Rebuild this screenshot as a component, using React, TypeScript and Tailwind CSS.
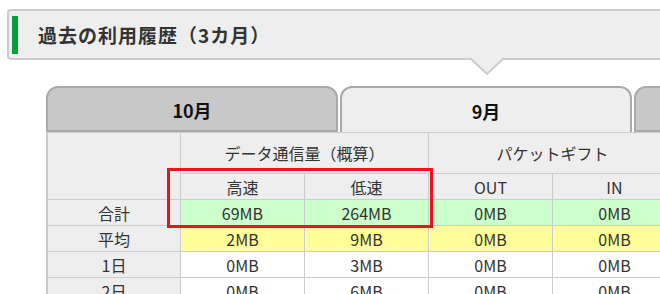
import React from 'react';

interface UsageRow {
    label: string;
    values: string[];
    tone: 'green' | 'yellow' | 'white';
}

const rows: UsageRow[] = [
    { label: '合計', values: ['69MB', '264MB', '0MB', '0MB'], tone: 'green' },
    { label: '平均', values: ['2MB', '9MB', '0MB', '0MB'], tone: 'yellow' },
    { label: '1日', values: ['0MB', '3MB', '0MB', '0MB'], tone: 'white' },
    { label: '2日', values: ['0MB', '6MB', '0MB', '0MB'], tone: 'white' },
    { label: '3日', values: ['0MB', '2MB', '0MB', '0MB'], tone: 'white' },
];

const toneClass = {
    green: 'bg-[#ccffcc]',
    yellow: 'bg-[#ffff99]',
    white: 'bg-white',
};

const tabs = [
    { label: '10月', active: false },
    { label: '9月', active: true },
    { label: '8月', active: false },
];

const cell = 'flex items-center justify-center border-r border-b border-[#cccccc] text-[16px] text-[#333333]';

export default function App() {
    return (
        <div className="relative w-[660px] h-[294px] overflow-hidden bg-white font-['Noto_Sans_CJK_JP','Noto_Sans',sans-serif]">
            {/* Section heading */}
            <div className="relative ml-[7px] mt-[9px] w-[700px] h-[51px] flex items-center border-2 border-[#cccccc] rounded-[4px] bg-[#eeeeee]">
                <div className="ml-[3px] w-[6px] h-[38px] bg-[#00a13a]" />
                <h2 className="ml-[20px] text-[19px] font-bold leading-none tracking-[1px] text-[#333333]">
                    過去の利用履歴（3カ月）
                </h2>
                <svg
                    className="absolute left-[460px] top-[46px]"
                    width="36"
                    height="20"
                    viewBox="0 0 36 20"
                >
                    <polygon points="0,0 18,17 36,0" fill="#eeeeee" />
                    <polyline points="1,1 18,17 35,1" fill="none" stroke="#cccccc" strokeWidth="2" />
                </svg>
            </div>

            {/* Month tabs */}
            <div className="ml-[46px] mt-[26px] flex gap-[2px]">
                {tabs.map((tab) => (
                    <div
                        key={tab.label}
                        className={
                            tab.active
                                ? 'w-[292px] h-[46px] shrink-0 flex items-center justify-center pt-[3px] rounded-t-[12px] border-2 border-b-0 border-[#aaaaaa] bg-[#eeeeee] text-[18px] font-bold text-[#111111]'
                                : 'w-[292px] h-[46px] shrink-0 flex items-center justify-center pt-[3px] rounded-t-[12px] border-2 border-[#aaaaaa] bg-[#c8c8c8] text-[18px] font-bold text-[#111111]'
                        }
                    >
                        {tab.label}
                    </div>
                ))}
            </div>

            {/* Usage table */}
            <div className="relative ml-[46px] w-[630px] border-l-2 border-t border-[#cccccc]">
                <div className="grid grid-cols-[133px_124px_124px_124px_124px]">
                    <div className={`${cell} row-span-2 bg-[#eeeeee]`} />
                    <div className={`${cell} col-span-2 h-[41px] bg-[#eeeeee]`}>データ通信量（概算）</div>
                    <div className={`${cell} col-span-2 h-[41px] bg-[#eeeeee]`}>パケットギフト</div>
                    <div className={`${cell} h-[26px] bg-[#eeeeee]`}>高速</div>
                    <div className={`${cell} h-[26px] bg-[#eeeeee]`}>低速</div>
                    <div className={`${cell} h-[26px] bg-[#eeeeee]`}>OUT</div>
                    <div className={`${cell} h-[26px] bg-[#eeeeee]`}>IN</div>
                    {rows.map((row) => (
                        <React.Fragment key={row.label}>
                            <div className={`${cell} h-[26px] bg-[#eeeeee]`}>{row.label}</div>
                            {row.values.map((v, i) => (
                                <div key={i} className={`${cell} h-[26px] ${toneClass[row.tone]}`}>
                                    {v}
                                </div>
                            ))}
                        </React.Fragment>
                    ))}
                </div>

                {/* Highlight frame */}
                <div className="absolute left-[119px] top-[35px] w-[266px] h-[60px] border-[3px] border-[#e8141e]" />
            </div>
        </div>
    );
}
